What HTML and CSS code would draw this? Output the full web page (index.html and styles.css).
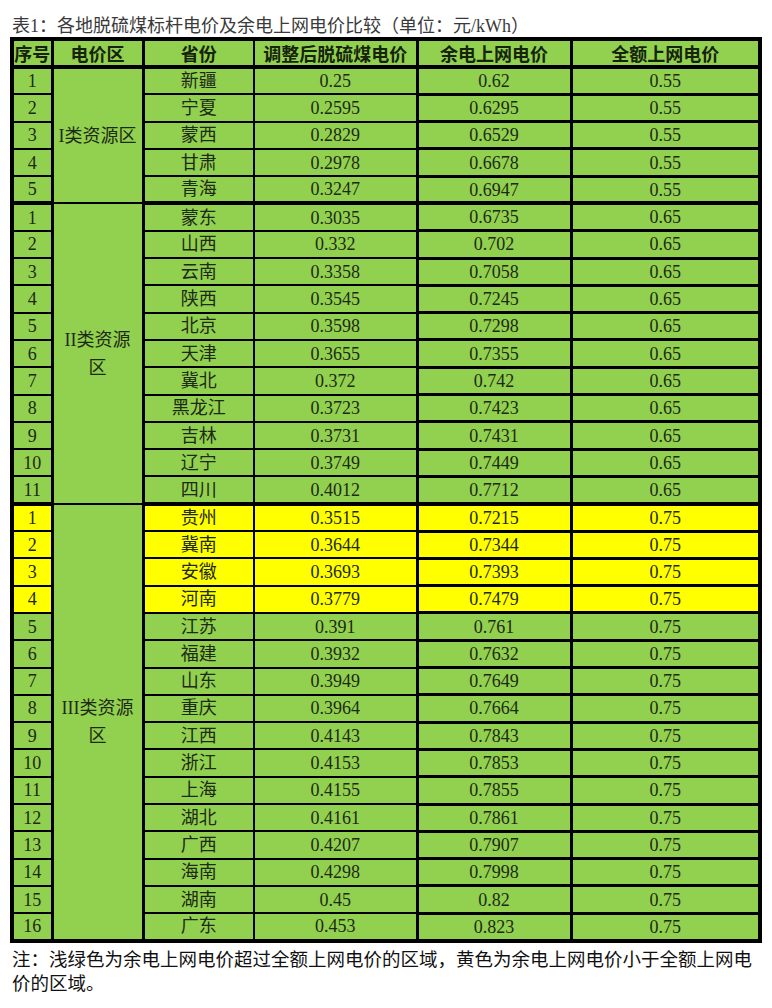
FILE: index.html
```html
<!DOCTYPE html>
<html lang="zh-CN">
<head>
<meta charset="utf-8">
<title>各地脱硫煤标杆电价及余电上网电价比较</title>
<link rel="stylesheet" href="styles.css">
</head>
<body>
<div class="page">
  <div class="caption">表1：各地脱硫煤标杆电价及余电上网电价比较（单位：元/kWh）</div>
  <table class="prices">
    <colgroup>
      <col class="w1"><col class="w2"><col class="w3"><col class="w4"><col class="w5"><col class="w6">
    </colgroup>
    <thead>
      <tr>
        <th class="c1">序号</th><th class="c2">电价区</th><th class="c3">省份</th><th class="c4">调整后脱硫煤电价</th><th class="c5">余电上网电价</th><th class="c6">全额上网电价</th>
      </tr>
    </thead>
    <tbody>
      <tr><td class="c1">1</td><td class="c2 zone" rowspan="5">I类资源区</td><td class="c3">新疆</td><td class="c4">0.25</td><td class="c5">0.62</td><td class="c6">0.55</td></tr>
      <tr><td class="c1">2</td><td class="c3">宁夏</td><td class="c4">0.2595</td><td class="c5">0.6295</td><td class="c6">0.55</td></tr>
      <tr><td class="c1">3</td><td class="c3">蒙西</td><td class="c4">0.2829</td><td class="c5">0.6529</td><td class="c6">0.55</td></tr>
      <tr><td class="c1">4</td><td class="c3">甘肃</td><td class="c4">0.2978</td><td class="c5">0.6678</td><td class="c6">0.55</td></tr>
      <tr class="end"><td class="c1">5</td><td class="c3">青海</td><td class="c4">0.3247</td><td class="c5">0.6947</td><td class="c6">0.55</td></tr>

      <tr><td class="c1">1</td><td class="c2 zone" rowspan="11">II类资源<br>区</td><td class="c3">蒙东</td><td class="c4">0.3035</td><td class="c5">0.6735</td><td class="c6">0.65</td></tr>
      <tr><td class="c1">2</td><td class="c3">山西</td><td class="c4">0.332</td><td class="c5">0.702</td><td class="c6">0.65</td></tr>
      <tr><td class="c1">3</td><td class="c3">云南</td><td class="c4">0.3358</td><td class="c5">0.7058</td><td class="c6">0.65</td></tr>
      <tr><td class="c1">4</td><td class="c3">陕西</td><td class="c4">0.3545</td><td class="c5">0.7245</td><td class="c6">0.65</td></tr>
      <tr><td class="c1">5</td><td class="c3">北京</td><td class="c4">0.3598</td><td class="c5">0.7298</td><td class="c6">0.65</td></tr>
      <tr><td class="c1">6</td><td class="c3">天津</td><td class="c4">0.3655</td><td class="c5">0.7355</td><td class="c6">0.65</td></tr>
      <tr><td class="c1">7</td><td class="c3">冀北</td><td class="c4">0.372</td><td class="c5">0.742</td><td class="c6">0.65</td></tr>
      <tr><td class="c1">8</td><td class="c3">黑龙江</td><td class="c4">0.3723</td><td class="c5">0.7423</td><td class="c6">0.65</td></tr>
      <tr><td class="c1">9</td><td class="c3">吉林</td><td class="c4">0.3731</td><td class="c5">0.7431</td><td class="c6">0.65</td></tr>
      <tr><td class="c1">10</td><td class="c3">辽宁</td><td class="c4">0.3749</td><td class="c5">0.7449</td><td class="c6">0.65</td></tr>
      <tr class="end"><td class="c1">11</td><td class="c3">四川</td><td class="c4">0.4012</td><td class="c5">0.7712</td><td class="c6">0.65</td></tr>

      <tr class="low"><td class="c1">1</td><td class="c2 zone" rowspan="16">III类资源<br>区</td><td class="c3">贵州</td><td class="c4">0.3515</td><td class="c5">0.7215</td><td class="c6">0.75</td></tr>
      <tr class="low"><td class="c1">2</td><td class="c3">冀南</td><td class="c4">0.3644</td><td class="c5">0.7344</td><td class="c6">0.75</td></tr>
      <tr class="low"><td class="c1">3</td><td class="c3">安徽</td><td class="c4">0.3693</td><td class="c5">0.7393</td><td class="c6">0.75</td></tr>
      <tr class="low"><td class="c1">4</td><td class="c3">河南</td><td class="c4">0.3779</td><td class="c5">0.7479</td><td class="c6">0.75</td></tr>
      <tr><td class="c1">5</td><td class="c3">江苏</td><td class="c4">0.391</td><td class="c5">0.761</td><td class="c6">0.75</td></tr>
      <tr><td class="c1">6</td><td class="c3">福建</td><td class="c4">0.3932</td><td class="c5">0.7632</td><td class="c6">0.75</td></tr>
      <tr><td class="c1">7</td><td class="c3">山东</td><td class="c4">0.3949</td><td class="c5">0.7649</td><td class="c6">0.75</td></tr>
      <tr><td class="c1">8</td><td class="c3">重庆</td><td class="c4">0.3964</td><td class="c5">0.7664</td><td class="c6">0.75</td></tr>
      <tr><td class="c1">9</td><td class="c3">江西</td><td class="c4">0.4143</td><td class="c5">0.7843</td><td class="c6">0.75</td></tr>
      <tr><td class="c1">10</td><td class="c3">浙江</td><td class="c4">0.4153</td><td class="c5">0.7853</td><td class="c6">0.75</td></tr>
      <tr><td class="c1">11</td><td class="c3">上海</td><td class="c4">0.4155</td><td class="c5">0.7855</td><td class="c6">0.75</td></tr>
      <tr><td class="c1">12</td><td class="c3">湖北</td><td class="c4">0.4161</td><td class="c5">0.7861</td><td class="c6">0.75</td></tr>
      <tr><td class="c1">13</td><td class="c3">广西</td><td class="c4">0.4207</td><td class="c5">0.7907</td><td class="c6">0.75</td></tr>
      <tr><td class="c1">14</td><td class="c3">海南</td><td class="c4">0.4298</td><td class="c5">0.7998</td><td class="c6">0.75</td></tr>
      <tr><td class="c1">15</td><td class="c3">湖南</td><td class="c4">0.45</td><td class="c5">0.82</td><td class="c6">0.75</td></tr>
      <tr><td class="c1">16</td><td class="c3">广东</td><td class="c4">0.453</td><td class="c5">0.823</td><td class="c6">0.75</td></tr>
    </tbody>
  </table>
  <p class="note">注：浅绿色为余电上网电价超过全额上网电价的区域，黄色为余电上网电价小于全额上网电价的区域。</p>
</div>
</body>
</html>
```

FILE: styles.css
```css
html, body {
  margin: 0;
  padding: 0;
  background: #ffffff;
}

.page {
  width: 772px;
  height: 1008px;
  overflow: hidden;
}

.caption {
  padding: 15px 0 0 12px;
  height: 22px;
  line-height: 22px;
  font-family: "Liberation Serif", "Noto Sans CJK SC", serif;
  font-size: 18px;
  color: #3a3a3a;
  white-space: nowrap;
}

.prices {
  margin-left: 10px;
  width: 748px;
  table-layout: fixed;
  border-collapse: collapse;
  border: 4px solid #000;
  font-family: "Liberation Serif", "Noto Sans CJK SC", serif;
  font-size: 18px;
  color: #1d2a14;
}

.w1 { width: 40px; }
.w2 { width: 91px; }
.w3 { width: 111px; }
.w4 { width: 163px; }
.w5 { width: 154px; }
.w6 { width: 189px; }

.prices th,
.prices td {
  background: #92d050;
  border: 2px solid #000;
  padding: 0;
  text-align: center;
  vertical-align: middle;
  white-space: nowrap;
}

.prices thead tr {
  height: 28px;
}

.prices th {
  font-family: "Noto Sans CJK SC", "Liberation Sans", sans-serif;
  font-weight: 700;
  font-size: 18px;
  line-height: 22px;
  color: #16240c;
  border-bottom-width: 4px;
}

.prices tbody tr {
  height: 27.3px;
}

.prices td {
  line-height: 22px;
}

.prices .c1,
.prices .c2,
.prices .c4,
.prices .c5 {
  border-right-width: 3px;
}

.prices td.c5,
.prices td.c6 {
  border-top-width: 3px;
  border-bottom-width: 3px;
}

.prices tr.end td {
  border-bottom-width: 4px;
}

.prices tr.low td {
  background: #ffff00;
}

.prices tr td.zone {
  background: #92d050;
  line-height: 28px;
  font-size: 18px;
}

.note {
  margin: 3px 0 0 12px;
  width: 752px;
  font-family: "Noto Sans CJK SC", "Liberation Sans", sans-serif;
  font-size: 18.5px;
  line-height: 24px;
  color: #111;
}
```
